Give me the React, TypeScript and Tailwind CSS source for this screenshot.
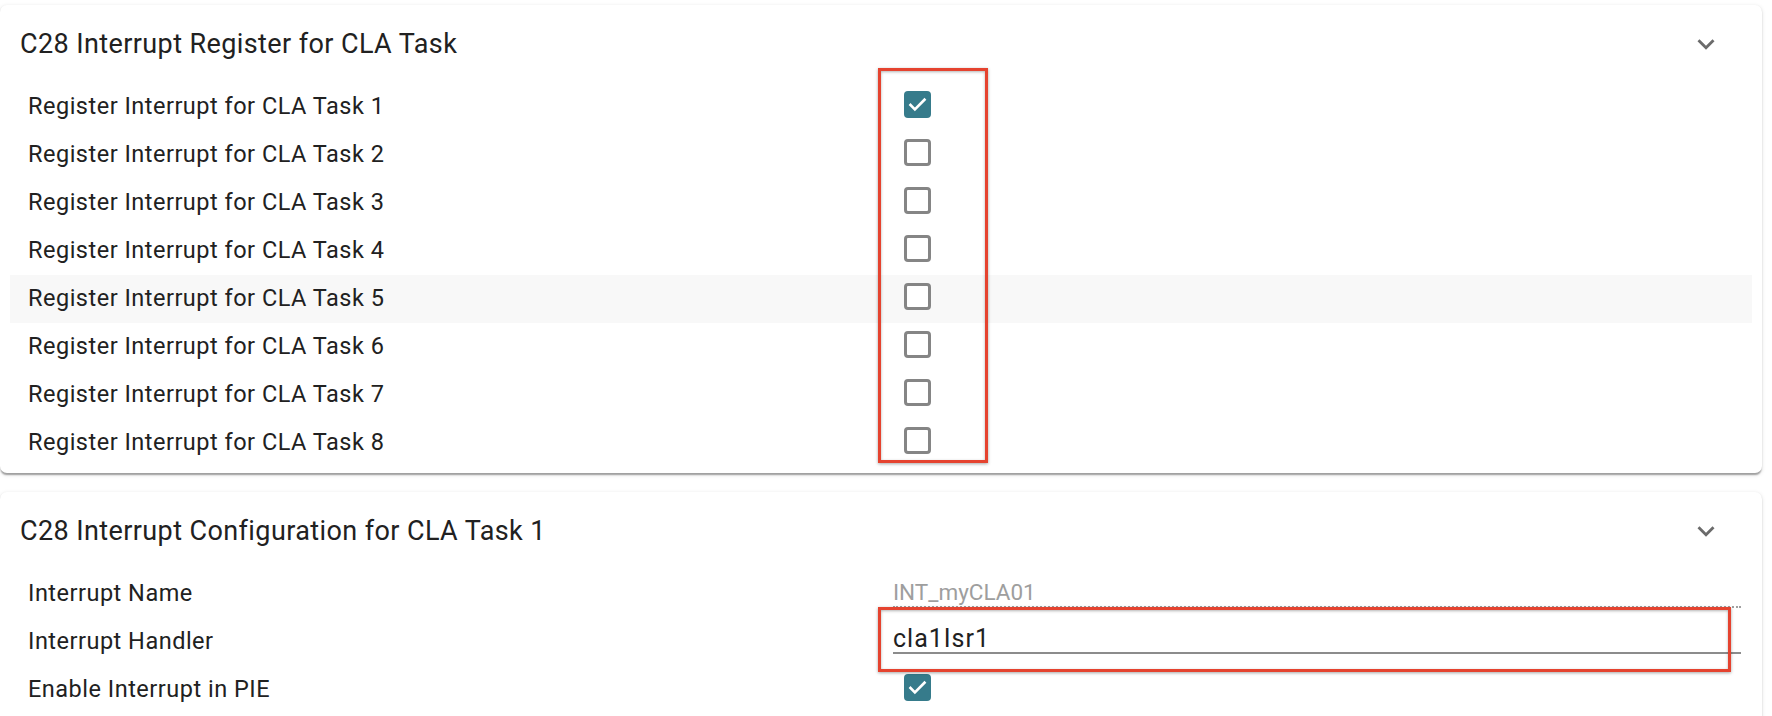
import React from "react";

const tasks = [1, 2, 3, 4, 5, 6, 7, 8];

function Chevron() {
  return (
    <svg width="34" height="34" viewBox="0 0 24 24" className="fill-[#6b6b6b]">
      <path d="M16.59 8.59 12 13.17 7.41 8.59 6 10l6 6 6-6z" />
    </svg>
  );
}

function Checkbox({ checked }: { checked?: boolean }) {
  if (checked) {
    return (
      <div className="ml-[11px] -translate-y-[3px] w-[27px] h-[27px] rounded-[4px] bg-[#367b8b] flex items-center justify-center">
        <svg width="21" height="21" viewBox="0 0 24 24" fill="none">
          <path d="M4 12.5l5 5L20 6.5" stroke="#fff" strokeWidth="3" strokeLinecap="square" />
        </svg>
      </div>
    );
  }
  return (
    <div className="ml-[11px] -translate-y-[3px] w-[27px] h-[27px] rounded-[4px] border-[3px] border-[#858585] bg-white" />
  );
}

function Row({ label, children, shaded }: { label: string; children: React.ReactNode; shaded?: boolean }) {
  return (
    <div className={`mx-[10px] h-[48px] flex items-center pl-[18px] pr-[11px] ${shaded ? "bg-[#f8f8f8]" : ""}`}>
      <div className="w-[865px] text-[23.5px] tracking-[0.5px] text-[#212121]">{label}</div>
      <div className="flex-1 flex items-center">{children}</div>
    </div>
  );
}

function Header({ title }: { title: string }) {
  return (
    <div className="h-[78px] flex items-center justify-between pl-[20px] pr-[39px]">
      <div className="text-[27px] tracking-[0.4px] text-[#212121]">{title}</div>
      <Chevron />
    </div>
  );
}

const cardClass =
  "bg-white rounded-[7px] mr-[10px] shadow-[0_3px_1.5px_-1.5px_rgba(0,0,0,0.2),0_1.5px_1.5px_0_rgba(0,0,0,0.14),0_1.5px_4px_0_rgba(0,0,0,0.12)]";

export default function App() {
  return (
    <div className="relative w-[1772px] h-[716px] overflow-hidden bg-white pt-[5px] font-['Roboto',sans-serif]">
      <div className={`${cardClass} pb-[6px]`}>
        <Header title="C28 Interrupt Register for CLA Task" />
        {tasks.map((t) => (
          <Row key={t} label={`Register Interrupt for CLA Task ${t}`} shaded={t === 5}>
            <Checkbox checked={t === 1} />
          </Row>
        ))}
      </div>

      <div className={`${cardClass} mt-[19px] h-[300px]`}>
        <Header title="C28 Interrupt Configuration for CLA Task 1" />
        <Row label="Interrupt Name">
          <div className="flex-1 h-[48px] flex items-center border-b-[2px] border-dotted border-[#a0a0a0] translate-y-[-10px] pt-[20px] text-[22.5px] text-[#9e9e9e]">
            INT_myCLA01
          </div>
        </Row>
        <Row label="Interrupt Handler">
          <div className="flex-1 h-[48px] flex items-center border-b-[2px] border-[#8c8c8c] translate-y-[-12px] pt-[20px] text-[25px] tracking-[1px] text-[#212121]">
            cla1Isr1
          </div>
        </Row>
        <Row label="Enable Interrupt in PIE">
          <Checkbox checked />
        </Row>
      </div>

      <div className="absolute left-[878px] top-[68px] w-[110px] h-[395px] border-[3px] border-[#e5432f] shadow-[0_1px_3px_rgba(0,0,0,0.35),inset_0_1px_3px_rgba(0,0,0,0.3)]" />
      <div className="absolute left-[878px] top-[607px] w-[853px] h-[65px] border-[3px] border-[#e5432f] shadow-[0_1px_3px_rgba(0,0,0,0.35),inset_0_1px_3px_rgba(0,0,0,0.3)]" />
    </div>
  );
}
